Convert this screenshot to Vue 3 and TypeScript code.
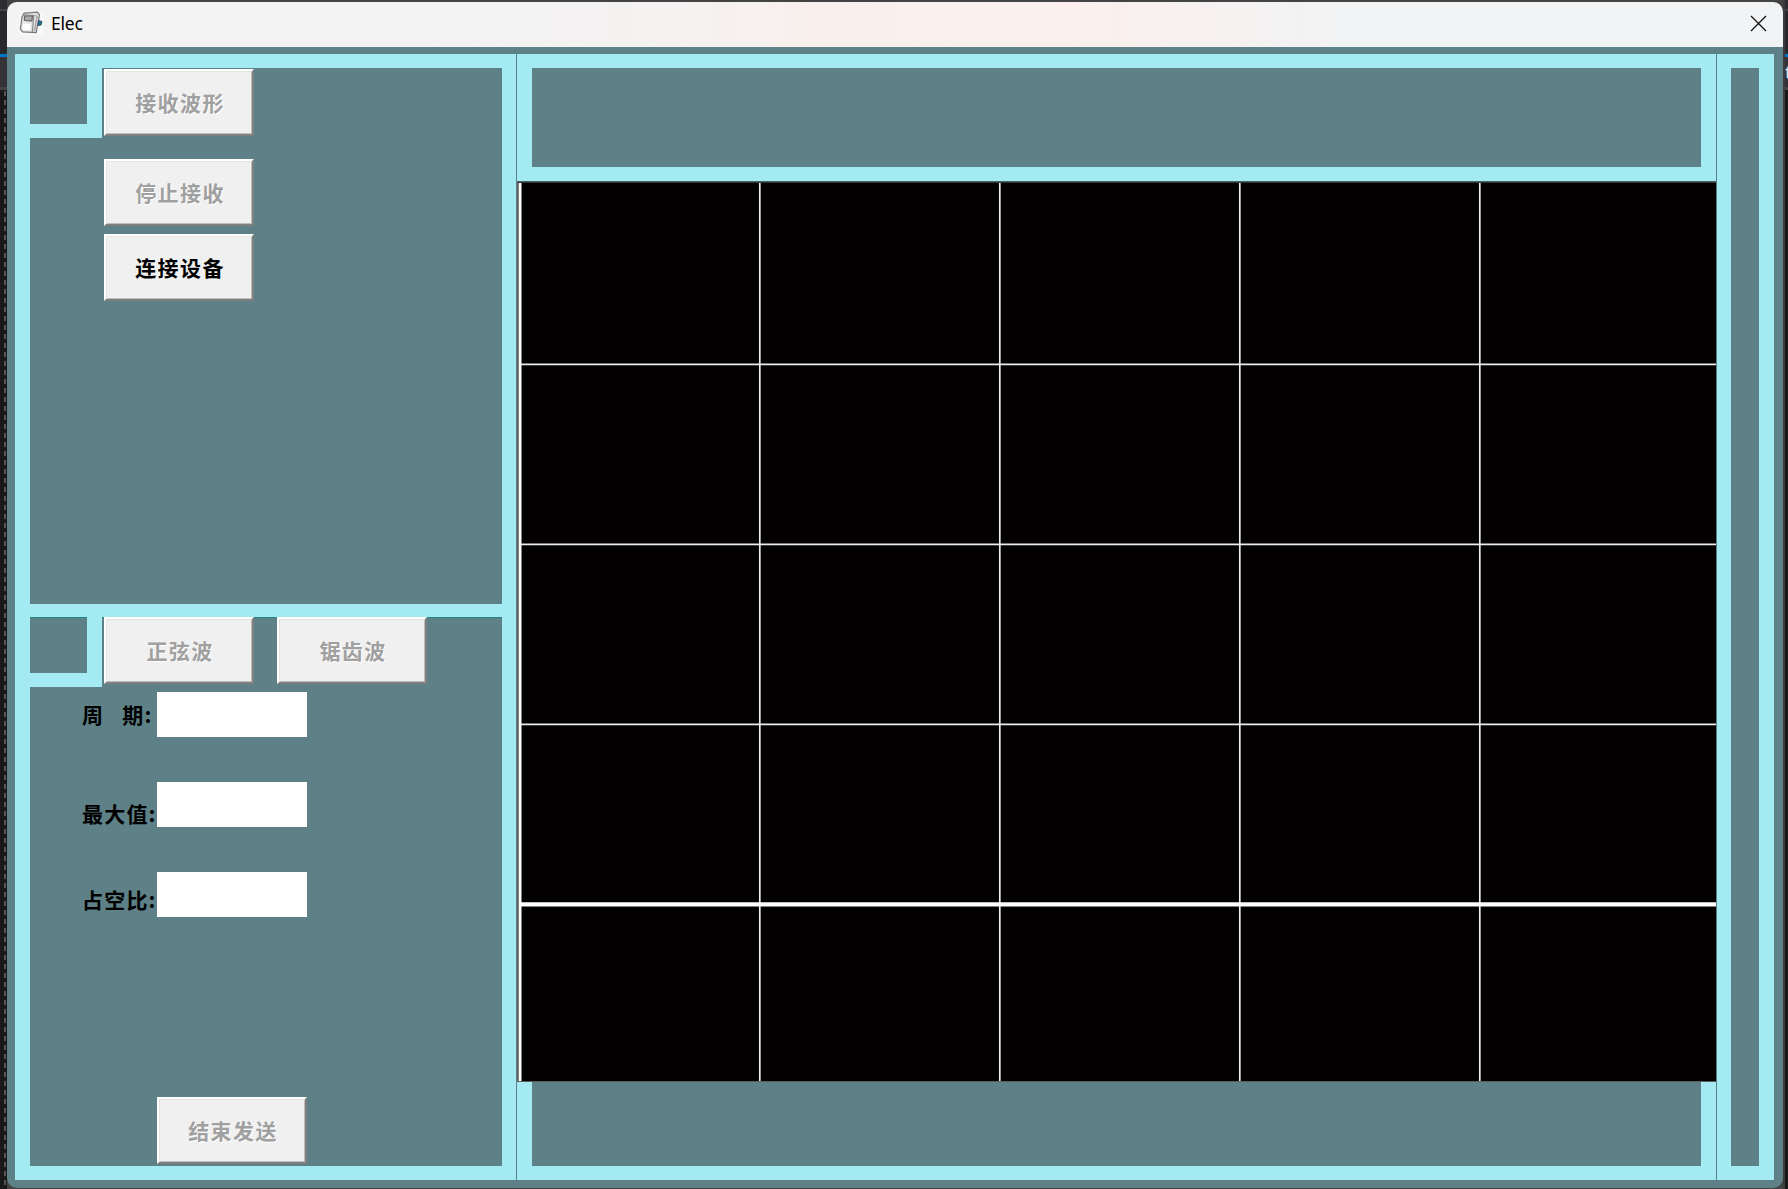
<script setup lang="ts">
interface Field {
  id: string
  label: string
  shift: number
}

const receiveButtons = [
  { text: '接收波形', enabled: false },
  { text: '停止接收', enabled: false },
  { text: '连接设备', enabled: true },
]
const waveButtons = ['正弦波', '锯齿波']
const fields: Field[] = [
  { id: 'period', label: '周\u2002\u2005期:', shift: 0 },
  { id: 'max', label: '最大值:', shift: 9 },
  { id: 'duty', label: '占空比:', shift: 5 },
]
const columns = [241.8, 481.8, 721.8, 961.8]
const rows = [182.5, 362.5, 542.5]
</script>

<template>
  <div class="desktop">
    <div class="behind-text">elections</div>
    <div class="edge left-edge"></div>
    <div class="edge right-edge"><span>t</span></div>
    <main class="window">
      <header class="titlebar">
        <svg class="app-icon" width="24" height="24" viewBox="0 0 24 24">
          <rect width="24" height="24" fill="#f8f8f8" />
          <path d="M5 2.2 18.5 1.2 20.5 4 17.2 21.5 3.5 20.8 1.4 18 3 6Z" fill="#e3e3e3" stroke="#777" stroke-width="1.2" />
          <path d="M4.2 3.8 14.8 4.5 13.3 21" fill="none" stroke="#888" stroke-width="1.1" />
          <path d="M5.5 5h8l-.7 5-7.4-.7Z" fill="#aaa" stroke="#666" stroke-width="1.2" />
          <path d="M4 12.5 12 13 11 19.5 3.5 19Z" fill="#fff" />
          <path d="M16.5 4 18 6 15.5 20" fill="none" stroke="#aaa" stroke-width="1.5" />
          <path d="M19.5 9.5 23 10.5 22 14 19 14.5Z" fill="#147ca3" stroke="#33525f" />
        </svg>
        <span class="title">Elec</span>
        <svg class="close" width="17" height="17" viewBox="0 0 17 17">
          <path d="M1 1 16 16M16 1 1 16" stroke="#111" stroke-width="1.3" />
        </svg>
      </header>
      <div class="client">
        <section class="left">
          <div class="panel upper">
            <div class="corner"></div>
            <div class="stack">
              <button v-for="b in receiveButtons" :key="b.text" :disabled="!b.enabled">{{ b.text }}</button>
            </div>
          </div>
          <div class="panel lower">
            <div class="wave-row">
              <div class="corner"></div>
              <button v-for="b in waveButtons" :key="b" disabled>{{ b }}</button>
            </div>
            <div class="fields">
              <div v-for="f in fields" :key="f.id" class="field">
                <label :for="f.id" :style="{ paddingTop: f.shift + 'px' }">{{ f.label }}</label>
                <input :id="f.id" type="text" />
              </div>
            </div>
            <button class="finish" disabled>结束发送</button>
          </div>
        </section>
        <section class="middle">
          <div class="top-frame"></div>
          <svg class="scope" width="1199" height="901" viewBox="0 0 1199 901">
            <rect width="1199" height="901" fill="#020000" />
            <path d="M0 .5H1199" stroke="#4c6366" />
            <path d="M0 1.5H1199" stroke="#343434" />
            <path d="M.5 0V901" stroke="#5f6566" />
            <path v-for="x in columns" :key="x" :d="`M${x + 1} 2V900`" stroke="#ededed" stroke-width="1.7" />
            <path v-for="y in rows" :key="y" :d="`M2 ${y + 0.8}H1199`" stroke="#ededed" stroke-width="1.8" />
            <path d="M2 723.4H1199" stroke="#fff" stroke-width="4.4" />
            <path d="M3 2V900" stroke="#fff" stroke-width="3" />
            <path d="M0 900.5H1199" stroke="#625d5d" />
          </svg>
          <div class="bottom-frame"></div>
        </section>
        <section class="right"></section>
      </div>
    </main>
  </div>
</template>

<style>
html,
body {
  margin: 0;
  overflow: hidden;
}
</style>

<style scoped>
* {
  box-sizing: border-box;
}
.desktop {
  position: relative;
  width: 1788px;
  height: 1189px;
  padding: 2px 5px 1px 7px;
  overflow: hidden;
  background: #444344;
  font-family: "Liberation Sans", "Noto Sans CJK SC", sans-serif;
}
.behind-text {
  position: absolute;
  left: 10px;
  top: -14px;
  height: 16px;
  font: 17px/16px "Open Sans", sans-serif;
  color: #ddd;
}
.edge {
  position: absolute;
  top: 0;
  bottom: 0;
  background: linear-gradient(#2d2d30 0 9px, #46464a 9px 11px, #29292c 11px 54px, #0078c8 54px 57px, #333337 57px 87px, #444448 87px 90px, #191919 90px);
}
.left-edge {
  left: 0;
  width: 7px;
}
.left-edge::after {
  content: "";
  position: absolute;
  left: 4px;
  top: 91px;
  bottom: 0;
  width: 2px;
  background: repeating-linear-gradient(#555 0 5px, #191919 5px 9px);
}
.right-edge {
  right: 0;
  width: 5px;
  border-left: 2px solid #3b3b3b;
}
.right-edge span {
  position: absolute;
  left: 0;
  top: 61px;
  font: 18px/22px "Open Sans", sans-serif;
  color: #d7e9f5;
}
.window {
  position: relative;
  width: 1776px;
  height: 1186px;
  overflow: hidden;
  border-radius: 10px;
  background: #5d8186;
}
.titlebar {
  display: flex;
  align-items: center;
  height: 45px;
  padding: 0 16px 0 12px;
  background: linear-gradient(90deg, #f3f3f3 0 24%, #f5f2f1 38%, #f9f0ed 46%, #fbf0ed 60%, #f2f3f4 75%, #f1f3f5);
}
.app-icon {
  margin-top: -3px;
}
.title {
  margin: -4px auto 0 8px;
  font: 17.5px/24px "Noto Sans", sans-serif;
  letter-spacing: -0.2px;
  color: #000;
}
.close {
  margin-top: -2px;
}
.client {
  display: grid;
  grid-template-columns: 501px 1199px 57px;
  column-gap: 1px;
  height: 1141px;
  padding: 7px 8px 8px 8px;
}
.left {
  display: flex;
  flex-direction: column;
  border: solid #a4eaf2;
  border-width: 14px 14px 14px 15px;
}
.panel {
  background: #5d8186;
}
.upper {
  display: flex;
  height: 536px;
}
.lower {
  flex: 1;
  border-top: 13px solid #a4eaf2;
}
.corner {
  flex: none;
  width: 72px;
  height: 70px;
  border: solid #a4eaf2;
  border-width: 0 15px 14px 0;
}
.stack {
  display: flex;
  flex-direction: column;
  padding: 1px 0 0 2px;
}
.stack button:nth-child(2) {
  margin: 23px 0 8px;
}
button {
  display: block;
  width: 150px;
  height: 67px;
  padding: 0 0 2px 2px;
  border: 2px solid;
  border-color: #fff #7f7f7f #7f7f7f #fff;
  background: #f0f0f0;
  box-shadow: inset 1px 1px #e3e3e3, inset -1px -1px #bdbdbd;
  font: 700 21px/30px "Noto Sans CJK SC", sans-serif;
  letter-spacing: 1.4px;
  color: #000;
}
button:disabled {
  color: #a0a0a0;
  text-shadow: 1px 1px #fff;
}
.wave-row {
  display: flex;
  height: 70px;
  box-shadow: inset 0 1px #238388;
}
.wave-row button {
  margin-left: 2px;
}
.wave-row button + button {
  margin-left: 23px;
}
.fields {
  display: flex;
  flex-direction: column;
  gap: 45px;
  padding: 5px 0 0 52px;
}
.field {
  display: flex;
  height: 45px;
}
label {
  width: 75px;
  font: 700 21px/44px "Noto Sans CJK SC", sans-serif;
  letter-spacing: 1.2px;
  color: #000;
  white-space: nowrap;
}
input {
  width: 150px;
  height: 45px;
  padding: 0 4px;
  border: 0;
  background: #fff;
  outline: none;
}
.finish {
  margin: 180px 0 0 127px;
}
.top-frame {
  height: 127px;
  border: solid #a4eaf2;
  border-width: 14px 15px 14px 15px;
}
.scope {
  display: block;
}
.bottom-frame {
  height: 98px;
  border: solid #a4eaf2;
  border-width: 0 15px 14px;
}
.right {
  border: solid #a4eaf2;
  border-width: 14px 15px 14px 14px;
}
</style>
